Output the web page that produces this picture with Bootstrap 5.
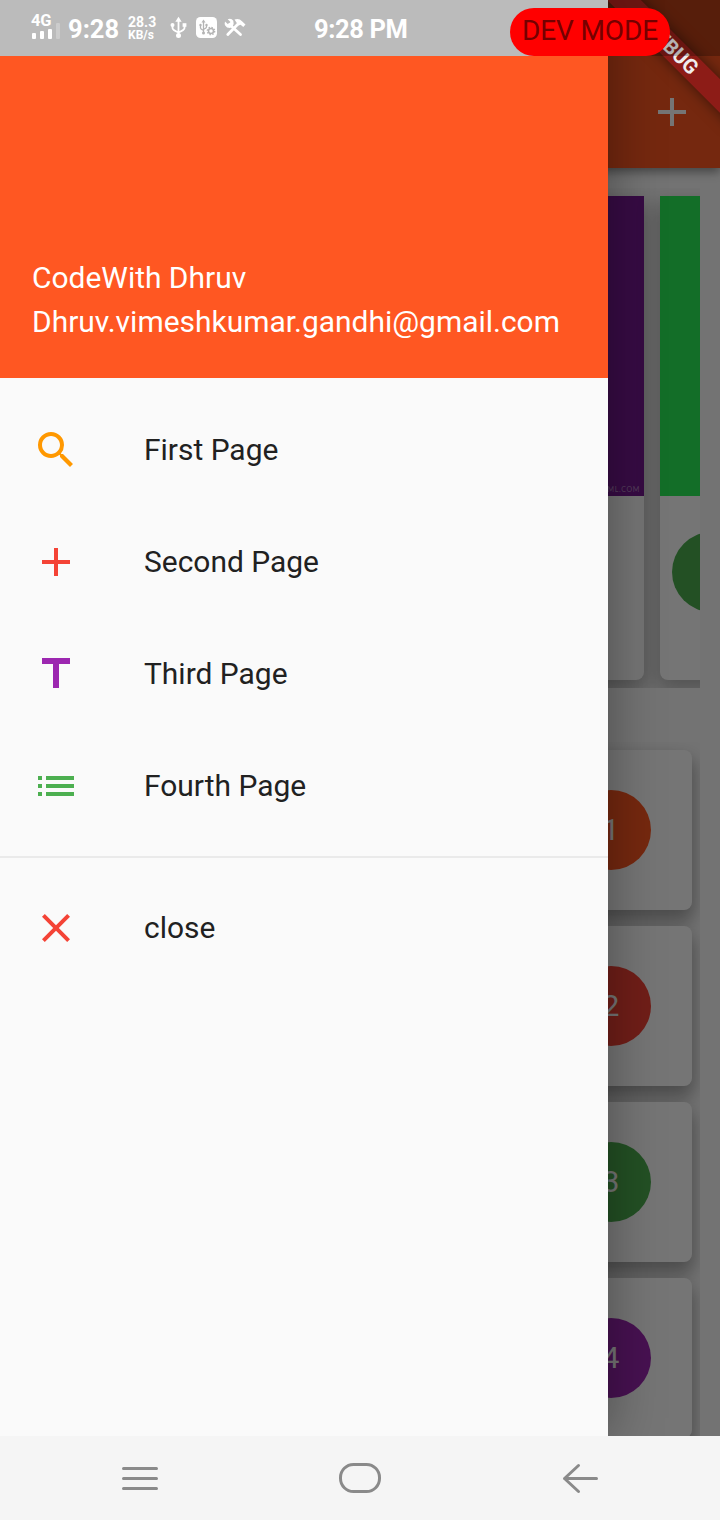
<!DOCTYPE html>
<html lang="en">
<head>
<meta charset="utf-8">
<meta name="viewport" content="width=device-width, initial-scale=1">
<title>CodeWith Dhruv</title>
<link href="https://cdn.jsdelivr.net/npm/bootstrap@5.3.0/dist/css/bootstrap.min.css" rel="stylesheet">
<style>
body{font-family:Roboto,"Noto Sans",sans-serif;background:#f5f5f5;color:#212121}
.phone{width:720px;height:1520px}
.stage{height:1436px;background:#fafafa}
.appbar{height:168px;padding:56px 24px 0;background:#ff5722;box-shadow:0 4px 9px rgba(0,0,0,.4);color:#fff}
.strip{width:680px;height:500px;margin:20px 0 0 20px;padding:8px 0}
.tile{width:608px;height:484px;margin-left:16px;border-radius:0 0 8px 8px;background:#fff;box-shadow:0 10px 20px 3px rgba(0,0,0,.26)}
.photo{height:300px}
.photo-violet{background:#781994;color:#b78bc6;font-family:Lato,sans-serif;font-size:7px;letter-spacing:.7px;line-height:9px;padding:0 4px 2px}
.photo-green{background:#2bf058}
.dot{width:80px;height:80px;border-radius:50%;color:#fff;font-size:30px;padding-bottom:2px}
.rows{width:680px;height:694px;margin:54px 0 0 20px;padding:8px 8px 0;gap:16px}
.rowcard{height:160px;border-radius:8px;background:#fff;padding-right:41px;box-shadow:0 10px 18px 2px rgba(0,0,0,.34)}
.scrim{background:rgba(0,0,0,.54)}
.side{width:608px;height:1436px;background:#fafafa;padding-top:56px;box-shadow:0 0 50px rgba(0,0,0,.36)}
.side-head{height:322px;background:#ff5722;color:#fff;padding:0 32px 34px;font-size:29.95px;line-height:44px}
.entry{height:112px;padding:0 32px;font-size:29.95px;line-height:44px}
.entry svg{margin-right:64px}
.rule{height:2px;background:#eaeaea}
.corner{left:608px;top:0;width:112px;height:168px}
.ribbon{left:-36px;top:36px;width:200px;height:24px;background:rgba(155,22,28,.63);transform:rotate(45deg);box-shadow:0 0 14px rgba(0,0,0,.5);color:#f0eeee;font-size:20.4px;font-weight:700;line-height:24px}
.status{height:56px;width:720px;background:rgba(0,0,0,.25);color:#fff;font-weight:700}
.clock{font-size:25.5px;line-height:30px}
.clock-mid{letter-spacing:-.4px}
.rate{font-size:13px;line-height:12.5px}
.net{font-size:16.5px;line-height:14px;letter-spacing:-.2px}
.dev{left:510px;top:8px;width:160px;height:48px;background:#f00;color:#750000;font-size:28px;letter-spacing:-.15px;font-weight:400}
.keys{height:84px;background:#f5f5f5;padding:0 30px}
</style>
</head>
<body>
<div class="phone position-relative overflow-hidden">
  <div class="stage position-relative overflow-hidden">
    <header class="appbar d-flex align-items-center justify-content-end">
      <svg width="48" height="48" viewBox="0 0 24 24" fill="currentColor"><path d="M19 13h-6v6h-2v-6H5v-2h6V5h2v6h6v2z"/></svg>
    </header>
    <section class="strip d-flex overflow-hidden">
      <div class="tile flex-shrink-0"><div class="photo photo-violet d-flex align-items-end justify-content-end">TML.COM</div></div>
      <div class="tile flex-shrink-0">
        <div class="photo photo-green"></div>
        <div class="dot" style="margin:36px 0 0 12px;background:#4caf50"></div>
      </div>
    </section>
    <section class="rows d-flex flex-column overflow-hidden">
      <div class="rowcard flex-shrink-0 d-flex align-items-center justify-content-end"><div class="dot d-flex align-items-center justify-content-center" style="background:#ff5722">1</div></div>
      <div class="rowcard flex-shrink-0 d-flex align-items-center justify-content-end"><div class="dot d-flex align-items-center justify-content-center" style="background:#f44336">2</div></div>
      <div class="rowcard flex-shrink-0 d-flex align-items-center justify-content-end"><div class="dot d-flex align-items-center justify-content-center" style="background:#4caf50">3</div></div>
      <div class="rowcard flex-shrink-0 d-flex align-items-center justify-content-end"><div class="dot d-flex align-items-center justify-content-center" style="background:#9c27b0">4</div></div>
    </section>
    <div class="scrim position-absolute top-0 start-0 w-100 h-100"></div>
    <aside class="side position-absolute top-0 start-0">
      <div class="side-head d-flex flex-column justify-content-end">
        <div>CodeWith Dhruv</div>
        <div>Dhruv.vimeshkumar.gandhi@gmail.com</div>
      </div>
      <nav class="pt-3">
        <div class="entry d-flex align-items-center"><svg width="48" height="48" viewBox="0 0 24 24" fill="#ff9800"><path d="M15.5 14h-.79l-.28-.27A6.471 6.471 0 0 0 16 9.5 6.5 6.5 0 1 0 9.5 16c1.61 0 3.09-.59 4.23-1.57l.27.28v.79l5 4.99L20.49 19l-4.99-5zm-6 0C7.01 14 5 11.99 5 9.5S7.01 5 9.5 5 14 7.01 14 9.5 11.99 14 9.5 14z"/></svg><span>First Page</span></div>
        <div class="entry d-flex align-items-center"><svg width="48" height="48" viewBox="0 0 24 24" fill="#f44336"><path d="M19 13h-6v6h-2v-6H5v-2h6V5h2v6h6v2z"/></svg><span>Second Page</span></div>
        <div class="entry d-flex align-items-center"><svg width="48" height="48" viewBox="0 0 24 24" fill="#9c27b0"><path d="M5 4v3h5.5v12h3V7H19V4z"/></svg><span>Third Page</span></div>
        <div class="entry d-flex align-items-center"><svg width="48" height="48" viewBox="0 0 24 24" fill="#4caf50"><path d="M3 13h2v-2H3v2zm0 4h2v-2H3v2zm0-8h2V7H3v2zm4 4h14v-2H7v2zm0 4h14v-2H7v2zM7 7v2h14V7H7z"/></svg><span>Fourth Page</span></div>
        <div class="rule" style="margin:14px 0"></div>
        <div class="entry d-flex align-items-center"><svg width="48" height="48" viewBox="0 0 24 24" fill="#f44336"><path d="M19 6.41 17.59 5 12 10.59 6.41 5 5 6.41 10.59 12 5 17.59 6.41 19 12 13.41 17.59 19 19 17.59 13.41 12z"/></svg><span>close</span></div>
      </nav>
    </aside>
    <div class="corner position-absolute overflow-hidden"><div class="ribbon position-absolute text-center">DEBUG</div></div>
    <div class="status position-absolute top-0 start-0 d-flex align-items-center">
      <div class="net d-flex flex-column" style="margin-left:31px;width:37px;padding-bottom:3px">
        <span>4G</span>
        <svg width="30" height="17" viewBox="0 0 30 17" style="margin-top:-6px"><g fill="#fff"><rect x="1" y="11" width="4" height="6" rx="1"/><rect x="9" y="9" width="4" height="8" rx="1"/><rect x="17" y="7" width="4" height="10" rx="1"/></g><rect x="25" y="1" width="4" height="16" rx="1" fill="#fff" opacity=".25"/></svg>
      </div>
      <div class="clock" style="width:60px;padding-top:2px">9:28</div>
      <div class="rate" style="width:41px;padding-top:1px"><span style="font-size:14px">28.3</span><br><span style="font-size:12px">KB/s</span></div>
      <svg width="80" height="24" viewBox="0 0 80 24">
        <g fill="none" stroke="#fff" stroke-width="1.800"><path d="M9.500 4v16M3.500 9v3q0 2 6 4.500M15.500 9v3q0 2-6 4.500"/></g>
        <g fill="#fff"><path d="m9.500 .8 3.200 5H6.300z"/><circle cx="9.500" cy="19.500" r="2.500"/><circle cx="3.500" cy="9" r="2"/><path d="M13.600 7.200h3.800v3.600h-3.800z"/></g>
        <rect x="27" y="1" width="21" height="21" rx="4.500" fill="#fff"/>
        <g fill="none" stroke="#b4b4b4" stroke-width="1.300"><path d="M34.500 6v11M31.500 9v3q0 1 3 2.500M37.500 9v2q0 1-3 2.500"/><circle cx="42" cy="15" r="2.500" stroke-width="1.500"/><circle cx="42" cy="15" r="3.700" stroke-dasharray="1.450 1.450"/></g>
        <g fill="#b4b4b4"><path d="m34.500 3.500 2 3h-4z"/><circle cx="34.500" cy="17" r="1.500"/><circle cx="31.500" cy="9" r="1.200"/><circle cx="37.500" cy="9" r="1.200"/></g>
        <path d="M60.500 8.500 71.500 18.500" stroke="#fff" stroke-width="2.800" stroke-linecap="round"/>
        <path d="M58.800 18.500 69 8" stroke="#fff" stroke-width="2.800" stroke-linecap="round"/>
        <path fill="#fff" d="M56 5.500 59 8.300 61.500 6 58.700 3.200Q62.500 2 64.300 4.800 65.300 7.500 63.500 10.500L61 12Q57.500 12 56.200 9.500 55.300 7.500 56 5.500zM65.500 3.500Q70 1.800 73 5.200L76.500 8.500 74.300 11 71.600 8.800 69.500 9.500 67.800 7z"/>
      </svg>
      <div class="clock clock-mid" style="margin-left:65px;padding-top:2px">9:28 PM</div>
    </div>
    <div class="dev position-absolute rounded-pill d-flex align-items-center justify-content-center"><span style="padding-bottom:3px">DEV MODE</span></div>
  </div>
  <footer class="keys d-flex justify-content-around align-items-center">
    <svg width="48" height="48" viewBox="0 0 48 48" fill="none" stroke="#8a8a8a" stroke-width="3" stroke-linecap="round"><path d="M7.500 14.500h33M7.500 24.500h33M7.500 34.500h33"/></svg>
    <svg width="48" height="48" viewBox="0 0 48 48" fill="none" stroke="#8a8a8a" stroke-width="3"><rect x="4.500" y="10.500" width="39" height="27" rx="13"/></svg>
    <svg width="48" height="48" viewBox="0 0 48 48" fill="none" stroke="#8a8a8a" stroke-width="3" stroke-linecap="round" stroke-linejoin="round"><path d="M40.500 24.500h-32M22.500 11.500 8.500 24.500l14 13"/></svg>
  </footer>
</div>
<script src="https://cdn.jsdelivr.net/npm/bootstrap@5.3.0/dist/js/bootstrap.bundle.min.js"></script>
</body>
</html>
